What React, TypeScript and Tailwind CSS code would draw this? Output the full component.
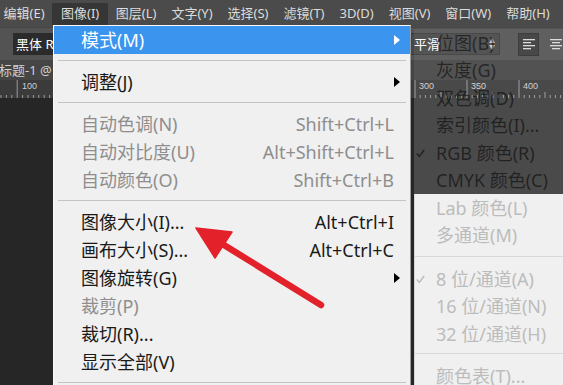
import React from "react";

// Photoshop-style "图像" menu open over the workspace, with the 模式 submenu fading in

type MenuEntry =
  | {
      label: string;
      shortcut?: string;
      disabled?: boolean;
      submenu?: boolean;
      active?: boolean;
      checked?: boolean;
    }
  | "sep";

const MENU_BAR = ["编辑(E)", "图像(I)", "图层(L)", "文字(Y)", "选择(S)", "滤镜(T)", "3D(D)", "视图(V)", "窗口(W)", "帮助(H)"];

const MAIN_MENU: MenuEntry[] = [
  { label: "模式(M)", submenu: true, active: true },
  "sep",
  { label: "调整(J)", submenu: true },
  "sep",
  { label: "自动色调(N)", shortcut: "Shift+Ctrl+L", disabled: true },
  { label: "自动对比度(U)", shortcut: "Alt+Shift+Ctrl+L", disabled: true },
  { label: "自动颜色(O)", shortcut: "Shift+Ctrl+B", disabled: true },
  "sep",
  { label: "图像大小(I)...", shortcut: "Alt+Ctrl+I" },
  { label: "画布大小(S)...", shortcut: "Alt+Ctrl+C" },
  { label: "图像旋转(G)", submenu: true },
  { label: "裁剪(P)", disabled: true },
  { label: "裁切(R)..." },
  { label: "显示全部(V)" },
  "sep",
];

// top six rows are still fading in, so they are drawn see-through
const MODE_FADING = [
  { label: "位图(B)" },
  { label: "灰度(G)" },
  { label: "双色调(D)" },
  { label: "索引颜色(I)..." },
  { label: "RGB 颜色(R)", checked: true },
  { label: "CMYK 颜色(C)" },
];

const MODE_REST: MenuEntry[] = [
  { label: "Lab 颜色(L)" },
  { label: "多通道(M)" },
  "sep",
  { label: "8 位/通道(A)", checked: true },
  { label: "16 位/通道(N)" },
  { label: "32 位/通道(H)" },
  "sep",
  { label: "颜色表(T)..." },
];

const Triangle: React.FC<{ color: string }> = ({ color }) => (
  <svg width="6" height="10" viewBox="0 0 6 10">
    <path d="M0 0 L6 5 L0 10 Z" fill={color} />
  </svg>
);

const Check: React.FC<{ color: string }> = ({ color }) => (
  <svg width="9" height="9" viewBox="0 0 9 9">
    <path d="M0.8 4.6 L3.3 7.4 L8.2 1" fill="none" stroke={color} strokeWidth="1.5" />
  </svg>
);

const AlignIcon: React.FC<{ center?: boolean }> = ({ center }) => (
  <svg width="12" height="11" viewBox="0 0 12 11">
    {[0, 3, 6, 9].map((y, i) => {
      const w = i % 2 === 0 ? 12 : 8;
      const x = center ? (12 - w) / 2 : 0;
      return <rect key={y} x={x} y={y} width={w} height="1.3" fill="#d8d8d8" />;
    })}
  </svg>
);

const Ruler: React.FC = () => {
  const ticks: React.ReactNode[] = [];
  // right-hand scale: 300 at x=415, 52px per 50 units
  for (let i = -40; i < 30; i++) {
    const x = 415 + i * 5.2;
    const major = i % 10 === 0;
    const mid = i % 5 === 0;
    ticks.push(
      <line key={`r${i}`} x1={x} x2={x} y1={major ? 0 : mid ? 12 : 15} y2={18} stroke="#9a9a9a" strokeWidth="1" />
    );
    if (major && i >= 0) {
      ticks.push(
        <text key={`t${i}`} x={x + 4} y={9} fontSize="9" fill="#cfcfcf" fontFamily="Liberation Sans, sans-serif">
          {300 + (i / 10) * 50}
        </text>
      );
    }
  }
  // left-hand strip
  for (let i = 0; i < 10; i++) {
    const x = 1 + i * 5.4;
    ticks.push(
      <line key={`l${i}`} x1={x} x2={x} y1={i === 3 ? 0 : 15} y2={18} stroke="#9a9a9a" strokeWidth="1" />
    );
  }
  ticks.push(
    <text key="l100" x={22} y={9} fontSize="9" fill="#cfcfcf" fontFamily="Liberation Sans, sans-serif">
      100
    </text>
  );
  return (
    <svg width="563" height="18" viewBox="0 0 563 18" className="block">
      {ticks}
    </svg>
  );
};

const MainMenu: React.FC = () => (
  <div className="absolute left-[53px] top-[25px] w-[358px] bg-[#f0f0f0] border-t border-l border-r border-t-[#fafafa] border-l-[#fafafa] border-r-[#9c9c9c] pb-2">
    {MAIN_MENU.map((item, i) =>
      item === "sep" ? (
        <div key={i} className="h-[14px] pt-[6px] px-[4px]">
          <div className="h-px bg-[#c4c4c4]" />
        </div>
      ) : (
        <div
          key={i}
          className={`relative flex items-center h-[28px] pl-[27px] pr-[16px] text-[18px] leading-none whitespace-nowrap ${
            item.active ? "bg-[#3b95ef] text-white" : item.disabled ? "text-[#8e8e8e]" : "text-[#1a1a1a]"
          }`}
        >
          <span>{item.label}</span>
          {item.shortcut && <span className="ml-auto">{item.shortcut}</span>}
          {item.submenu && (
            <span className="absolute right-[10px] top-[9px] flex">
              <Triangle color={item.active ? "#ffffff" : "#000000"} />
            </span>
          )}
        </div>
      )
    )}
  </div>
);

const ModeSubmenu: React.FC = () => (
  <div className="absolute left-[414px] top-[29px] w-[170px] whitespace-nowrap">
    <div className="bg-white/[0.07] text-black/55">
      {MODE_FADING.map((item) => (
        <div key={item.label} className="relative flex items-center h-[27.5px] pl-[22px] text-[18px] leading-none">
          {item.checked && (
            <span className="absolute left-[2px] top-[10px] flex">
              <Check color="rgba(0,0,0,0.55)" />
            </span>
          )}
          <span>{item.label}</span>
        </div>
      ))}
    </div>
    <div className="bg-[#f0f0f0] border-l border-[#d6d6d6] text-[#bcbcbc] pb-4">
      {MODE_REST.map((item, i) =>
        item === "sep" ? (
          <div key={i} className={i === 2 ? "h-[16px] pt-[7px]" : "h-[15px] pt-[5px]"}>
            <div className="h-px bg-[#d8d8d8]" />
          </div>
        ) : (
          <div key={i} className="relative flex items-center h-[27.5px] pl-[21px] text-[18px] leading-none">
            {item.checked && (
              <span className="absolute left-[1px] top-[10px] flex">
                <Check color="#bcbcbc" />
              </span>
            )}
            <span>{item.label}</span>
          </div>
        )
      )}
    </div>
  </div>
);

const RedArrow: React.FC = () => (
  <svg className="absolute left-0 top-0 pointer-events-none" width="563" height="385" viewBox="0 0 563 385">
    <line x1="224" y1="245" x2="321" y2="305" stroke="#e3212b" strokeWidth="6.5" strokeLinecap="round" />
    <path d="M196 228 L232 232 L215 258 Z" fill="#e3212b" stroke="#e3212b" strokeWidth="1.5" strokeLinejoin="round" />
  </svg>
);

export default function App() {
  return (
    <div className="relative w-[563px] h-[385px] overflow-hidden bg-[#262626] flex flex-col font-['Noto_Sans','Noto_Sans_CJK_SC',sans-serif]">
      {/* Menu bar */}
      <div className="h-[27px] shrink-0 bg-[#4b4b4b] flex items-center text-[13px] text-[#dcdcdc] leading-none whitespace-nowrap">
        {MENU_BAR.map((name, i) => (
          <div
            key={name}
            className={`shrink-0 h-[22px] flex items-center px-[7.5px] ${i === 0 ? "ml-[-4px]" : ""} ${
              i === 1 ? "bg-[#363636] px-[9px]" : ""
            }`}
          >
            {name}
          </div>
        ))}
      </div>

      {/* Options bar */}
      <div className="h-[33px] shrink-0 bg-[#535353] border-t border-[#474747] flex items-center whitespace-nowrap">
        <div className="shrink-0 ml-[13px] w-[190px] h-[22px] bg-[#2b2b2b] flex items-center pl-[3px] text-[13px] text-white leading-none">
          黑体 Regular
        </div>
        <div className="shrink-0 ml-[127px] w-[170px] h-[22px] bg-[#474747] border border-[#3a3a3a] flex items-center pr-[4px] text-[13px] text-white leading-none">
          <span className="pl-[83px]">平滑</span>
          <span className="ml-auto flex flex-col text-[6px] leading-[6px] text-[#cfcfcf]">
            <span>▲</span>
            <span>▼</span>
          </span>
        </div>
        <div className="shrink-0 ml-[18px] w-[21px] h-[23px] bg-[#3a3a3a] border border-[#2e2e2e] flex items-center justify-center">
          <AlignIcon />
        </div>
        <div className="shrink-0 ml-[6px] w-[21px] h-[23px] flex items-center justify-center">
          <AlignIcon center />
        </div>
      </div>

      {/* Document tab */}
      <div className="h-[20px] shrink-0 bg-[#454545] flex items-center text-[13px] text-[#d0d0d0] leading-none whitespace-nowrap">
        <span className="ml-[-14px]">未标题-1 @ 100%(RGB/8)</span>
      </div>

      {/* Ruler */}
      <div className="h-[18px] shrink-0 bg-[#3b3b3b]">
        <Ruler />
      </div>

      {/* Canvas area */}
      <div className="flex-1 flex">
        <div className="w-[414px] bg-[#262626]" />
        <div className="flex-1 bg-[#3c3c3c]" />
      </div>

      <MainMenu />
      <ModeSubmenu />
      <RedArrow />
    </div>
  );
}
